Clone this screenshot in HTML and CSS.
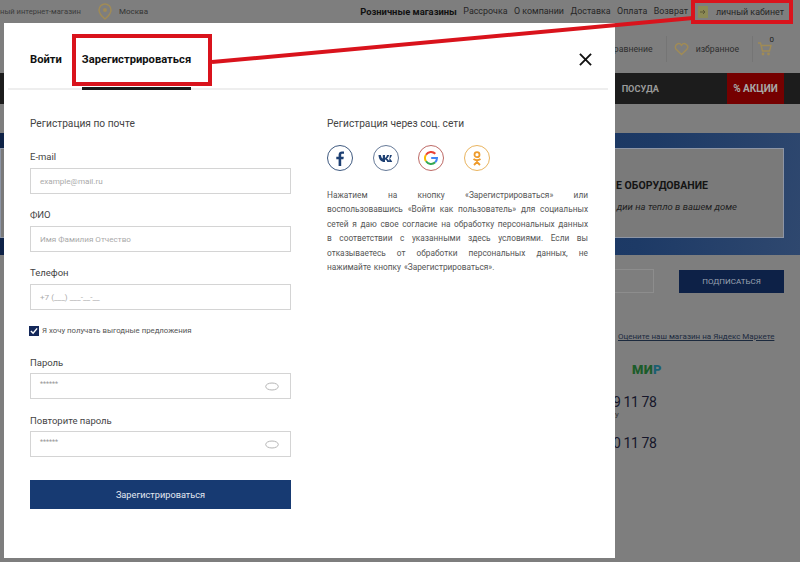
FILE: index.html
```html
<!DOCTYPE html>
<html lang="ru">
<head>
<meta charset="utf-8">
<title>Регистрация</title>
<link rel="stylesheet" href="styles.css">
</head>
<body>
<div class="page">
  <div class="site">
    <div class="topbar">
      <span class="shop">ный интернет-магазин</span>
      <svg class="pin" width="14" height="17" viewBox="0 0 14 17"><path d="M7 1a6 6 0 0 0-6 6c0 4 6 9 6 9s6-5 6-9a6 6 0 0 0-6-6z" fill="none" stroke="#a08b56" stroke-width="1.500"/><circle cx="7" cy="7" r="2" fill="#a08b56"/></svg>
      <span class="city">Москва</span>
      <nav class="topnav">
        <b>Розничные магазины</b><span>Рассрочка</span><span>О компании</span><span>Доставка</span><span>Оплата</span><span>Возврат</span>
      </nav>
      <div class="account">
        <svg width="12" height="12" viewBox="0 0 12 12"><rect x="1" y="0" width="10" height="12" fill="#8c8a55"/><path d="M3 6h5M6 4l2 2-2 2" fill="none" stroke="#5a5838"/></svg>
        <span>личный кабинет</span>
      </div>
    </div>
    <div class="header">
      <span class="hitem">сравнение</span>
      <span class="divider"></span>
      <svg width="15" height="14" viewBox="0 0 18 16"><path d="M9 14.5 2.3 8A4 4 0 0 1 9 3.5 4 4 0 0 1 15.7 8z" fill="none" stroke="#a08b56" stroke-width="1.700"/></svg>
      <span class="hitem">избранное</span>
      <span class="divider"></span>
      <div class="cart">
        <svg width="14" height="15" viewBox="0 0 14 15"><path d="M0 2h2.500l2 8h7l1.500-5.500H3.200" fill="none" stroke="#a08b56" stroke-width="1.400"/><circle cx="5" cy="13" r="1.400" fill="#a08b56"/><circle cx="10.500" cy="13" r="1.400" fill="#a08b56"/></svg>
        <span class="count">0</span>
      </div>
    </div>
    <div class="mainnav">
      <span class="navlink">ПОСУДА</span>
      <span class="sale">% АКЦИИ</span>
    </div>
    <div class="hero">
      <div class="herobox">
        <div class="herotitle">Е ОБОРУДОВАНИЕ</div>
        <div class="herotext">дии на тепло в вашем доме</div>
      </div>
    </div>
    <div class="subscribe">
      <span class="subinput"></span>
      <span class="subbtn">ПОДПИСАТЬСЯ</span>
    </div>
    <div class="footer">
      <a class="market">Оцените наш магазин на Яндекс Маркете</a>
      <div class="pay"><span class="mir">МИ<span class="mir-end">Р</span></span></div>
      <div class="phone">9 11 78</div>
      <div class="phone-note">у</div>
      <div class="phone">0 11 78</div>
    </div>
    <div class="peek">интернет-магазин</div>
  </div>

  <div class="modal">
    <div class="tabs">
      <span class="tab">Войти</span>
      <span class="tab tab-active">Зарегистрироваться</span>
      <svg class="close" width="13" height="13" viewBox="0 0 14 14"><path d="M1 1l12 12M13 1 1 13" stroke="#111" stroke-width="2"/></svg>
    </div>
    <div class="cols">
      <form class="col">
        <h2 class="heading">Регистрация по почте</h2>
        <div class="field">
          <label class="label">E-mail</label>
          <div class="input">example@mail.ru</div>
        </div>
        <div class="field">
          <label class="label">ФИО</label>
          <div class="input">Имя Фамилия Отчество</div>
        </div>
        <div class="field">
          <label class="label">Телефон</label>
          <div class="input">+7 (___) ___-__-__</div>
        </div>
        <div class="check">
          <span class="box"><svg width="9" height="9" viewBox="0 0 9 9"><path d="M1 4.500 3.500 7 8 1.500" fill="none" stroke="#fff" stroke-width="1.600"/></svg></span>
          <span>Я хочу получать выгодные предложения</span>
        </div>
        <div class="field field-tight">
          <label class="label">Пароль</label>
          <div class="input"><span class="stars">******</span>
            <svg class="eye" width="14" height="9" viewBox="0 0 14 9"><ellipse cx="7" cy="4.500" rx="6.300" ry="3.500" fill="none" stroke="#b5b5b5"/></svg></div>
        </div>
        <div class="field field-tight">
          <label class="label">Повторите пароль</label>
          <div class="input"><span class="stars">******</span>
            <svg class="eye" width="14" height="9" viewBox="0 0 14 9"><ellipse cx="7" cy="4.500" rx="6.300" ry="3.500" fill="none" stroke="#b5b5b5"/></svg></div>
        </div>
        <div class="submit">Зарегистрироваться</div>
      </form>
      <div class="col">
        <h2 class="heading">Регистрация через соц. сети</h2>
        <div class="socials">
          <span class="soc soc-fb"><svg width="8" height="15" viewBox="0 0 8 15"><path d="M5.200 15V8.300h2.200l.4-2.600H5.200V4.100c0-.8.2-1.300 1.300-1.300H8V.5C7.700.5 6.900.4 6 .4 4 .4 2.600 1.600 2.600 3.800v1.900H.3v2.600h2.300V15z" fill="#1d3f72"/></svg></span>
          <span class="soc soc-vk"><svg width="15" height="9" viewBox="0 0 15 9"><path d="M.5 1h2.300c.3 1.800 1.200 3.400 2 3.600V1H7v2.900c.8-.1 1.700-1.500 2-2.900h2.100c-.3 1.700-1.500 3-2.300 3.500.9.400 2.300 1.500 2.800 3.500H9.300C8.900 6.700 8 5.700 7 5.600V8h-.5C3.200 8 .7 5.500.5 1z" fill="#1d3f72"/><path d="M11 8h3.200c-.5-1.500-1.500-2.700-2.300-3.300.8-.8 1.700-2.300 2-3.700h-2" fill="#1d3f72"/></svg></span>
          <span class="soc soc-g"><svg width="14" height="14" viewBox="0 0 14 14"><path d="M11.300 2.800A6 6 0 0 0 2 3.700" fill="none" stroke="#ea4335" stroke-width="2"/><path d="M2 3.700a6 6 0 0 0 0 6.600" fill="none" stroke="#fbbc05" stroke-width="2"/><path d="M2 10.300a6 6 0 0 0 9.200.9" fill="none" stroke="#34a853" stroke-width="2"/><path d="M11.200 11.200A6 6 0 0 0 13 7H7.200" fill="none" stroke="#4285f4" stroke-width="2"/></svg></span>
          <span class="soc soc-ok"><svg width="10" height="15" viewBox="0 0 10 15"><circle cx="5" cy="3.700" r="2.500" fill="none" stroke="#ee9b2b" stroke-width="1.800"/><path d="M1.500 8c2 1.400 5 1.400 7 0M5 9.500V11M5 11l-3 3M5 11l3 3" fill="none" stroke="#ee9b2b" stroke-width="1.800"/></svg></span>
        </div>
        <p class="terms">Нажатием на кнопку «Зарегистрироваться» или воспользовавшись «Войти как пользователь» для социальных сетей я даю свое согласие на обработку персональных данных в соответствии с указанными здесь условиями. Если вы отказываетесь от обработки персональных данных, не нажимайте кнопку «Зарегистрироваться».</p>
      </div>
    </div>
  </div>

  <svg class="annot" width="800" height="562" viewBox="0 0 800 562">
    <g fill="none" stroke="#d9131c" stroke-width="4">
      <rect x="74" y="36" width="136" height="48"/>
      <rect x="693" y="1" width="98" height="21"/>
      <path d="M212 62 693 18"/>
    </g>
  </svg>
</div>
</body>
</html>
```
FILE: styles.css
```css
* { box-sizing: border-box; }
html, body { margin: 0; padding: 0; }
body { font-family: Roboto, "Liberation Sans", sans-serif; }
.page { position: relative; width: 800px; height: 562px; overflow: hidden; background: #7e7e7e; }
.site { display: flex; flex-direction: column; color: #1e1e1e; }

.topbar { display: flex; align-items: center; height: 23px; padding-right: 16px; color: #262626; }
.shop { width: 98px; font-size: 7.600px; color: #3c3c3c; white-space: nowrap; }
.city { margin-left: 7px; font-size: 8px; color: #333; }
.topnav { display: flex; gap: 6.500px; margin-left: auto; font-size: 8.900px; white-space: nowrap; }
.topnav b { color: #111; font-weight: 700; font-size: 9.400px; }
.account { display: flex; align-items: center; gap: 7px; margin-left: 9px; font-size: 8.900px; white-space: nowrap; }

.header { display: flex; align-items: center; justify-content: flex-end; gap: 7px; height: 50px; padding: 1px 28px 0 0; font-size: 8.700px; color: #2e2e2e; }
.divider { width: 1px; height: 26px; background: #757575; margin-left: 6px; }
.hitem { white-space: nowrap; }
.cart { position: relative; display: flex; margin-left: -2px; }
.count { position: absolute; right: -2px; top: -6px; font-size: 8px; color: #222; }

.mainnav { display: flex; align-items: center; justify-content: flex-end; height: 31px; background: #1c1c1c; padding-right: 16px; font-size: 10px; font-weight: 700; color: #9a9a9a; }
.navlink { margin-right: 68px; font-size: 9.200px; }
.sale { display: flex; align-items: center; justify-content: center; width: 57px; height: 31px; background: #750000; color: #a8a8a8; }

.hero { margin-top: 29px; height: 122px; padding: 15px 16px 17px 0; background: linear-gradient(100deg, #0e2246, #1d3a66 80%, #2f486f); }
.herobox { display: flex; flex-direction: column; align-items: flex-end; height: 90px; padding: 30px 75px 0 0; background: #7a7a7a; border: 1px solid #8d95a5; }
.herotitle { width: 100%; text-align: right; font-size: 10.500px; font-weight: 700; color: #141414; }
.herotext { margin-top: 9px; margin-right: -29px; font-size: 9.500px; font-style: italic; color: #222; }

.subscribe { display: flex; align-items: center; justify-content: flex-end; gap: 25px; height: 24px; margin-top: 14px; padding-right: 16px; }
.subinput { width: 120px; height: 24px; border: 1px solid #8d8d8d; }
.subbtn { display: flex; align-items: center; justify-content: center; width: 105px; height: 23px; background: #0d2147; color: #9ba3b1; font-size: 8px; }

.footer { display: flex; flex-direction: column; padding-left: 618px; margin-top: 39px; }
.market { font-size: 8px; color: #1c2a3e; text-decoration: underline; white-space: nowrap; }
.pay { height: 17px; margin-top: 20px; }
.mir { display: block; margin-left: 14px; font-size: 13px; font-weight: 900; color: #1c5c2a; line-height: 18px; letter-spacing: .3px; }
.mir-end { color: #1a5f72; }
.phone { margin: 15px 0 0 -5px; font-size: 14px; letter-spacing: -.4px; color: #16162a; line-height: 18px; }
.phone-note { margin-left: -3px; height: 8px; font-size: 8px; line-height: 8px; color: #333; }
.peek { margin: 107px 0 0 237px; font-size: 8px; line-height: 10px; color: #333; }

.modal { position: absolute; left: 4px; top: 23px; width: 611px; height: 535px; background: #fff; color: #444; }
.tabs { display: flex; align-items: flex-end; gap: 20px; height: 67px; margin: 0 7px 0 4px; padding-left: 22px; border-bottom: 2px solid #eeeeee; }
.tab { font-size: 11.200px; font-weight: 700; color: #111; height: 40px; line-height: 18px; padding-top: 3px; }
.tab-active { position: relative; }
.tab-active::after { content: ""; position: absolute; left: 0; right: 0; bottom: -2px; height: 3px; background: #1a1a1a; }
.close { position: absolute; right: 23px; top: 30px; }

.cols { display: flex; gap: 36px; padding: 0 26px; }
.col { width: 261px; margin: 0; }
.heading { margin: 26px 0 0; font-size: 10.200px; font-weight: 400; line-height: 15px; color: #444; }
.heading + .field { margin-top: 20px; }
.field { margin-top: 15px; }
.label { display: block; font-size: 9.500px; line-height: 12px; color: #444; margin-bottom: 5px; }
.field-tight { margin-top: 16px; }
.field-tight .label { margin-bottom: 4px; }
.input { display: flex; align-items: center; justify-content: space-between; height: 26px; padding: 0 11px 0 9px; border: 1px solid #d4d4d4; font-size: 8.100px; color: #aaa; }
.stars { font-size: 7px; color: #999; margin-bottom: 4px; }
.check { display: flex; align-items: center; gap: 3px; margin: 14px 0 0 -1px; height: 13px; font-size: 7.800px; color: #555; white-space: nowrap; }
.check + .field { margin-top: 20px; }
.box { display: flex; align-items: center; justify-content: center; width: 10px; height: 10px; background: #14285a; }
.box svg { width: 8px; height: 8px; }
.submit { display: flex; align-items: center; justify-content: center; height: 29px; margin-top: 23px; background: #173a72; color: #e3e8f0; font-size: 9.200px; }

.socials { display: flex; gap: 19.700px; margin-top: 14px; }
.soc { display: flex; align-items: center; justify-content: center; width: 26px; height: 26px; border-radius: 50%; border: 1.500px solid #3f5a80; }
.soc-vk { border-color: #667a98; }
.soc-g { border-color: #bd6a66; }
.soc-ok { border-color: #e9b45f; }
.terms { margin: 17px 0 0; font-size: 8.300px; word-spacing: .8px; line-height: 14.400px; color: #555; text-align: justify; }

.annot { position: absolute; left: 0; top: 0; }
```
